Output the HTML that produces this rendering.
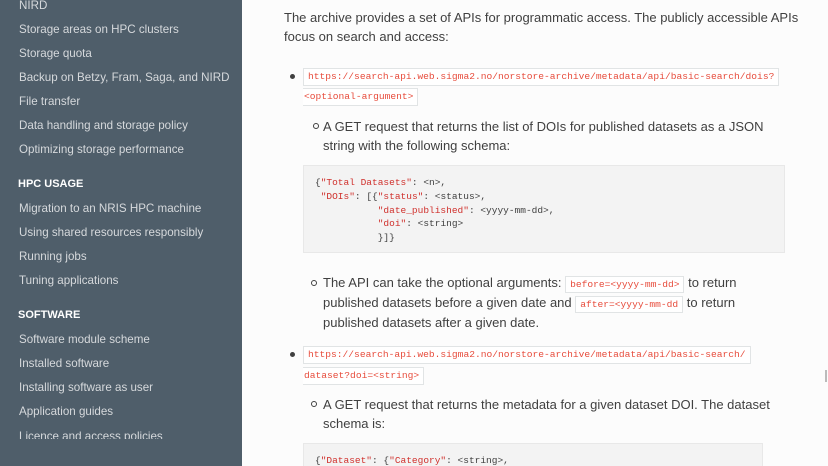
<!DOCTYPE html>
<html style="width:828px;height:466px;overflow:hidden"><head><meta charset="utf-8"><style>
*{margin:0;padding:0;box-sizing:border-box}
body{width:828px;height:466px;overflow:hidden;background:#fcfcfc;font-family:"Liberation Sans",sans-serif;position:relative}
.sb{position:absolute;left:0;top:0;width:242px;height:466px;background:#4f5e6a}
.sb .clip{position:absolute;left:0;top:0;width:242px;height:439px;overflow:hidden}
.sb div.i{position:absolute;left:19px;font-size:11.6px;color:#d6d9dc;line-height:14px;white-space:nowrap}
.sb div.h{position:absolute;left:18px;font-size:11px;font-weight:bold;color:#fff;line-height:14px}
.t{position:absolute;font-size:13px;color:#404040;line-height:19px;white-space:nowrap}
.c{font-family:"Liberation Mono",monospace;font-size:9.6px;color:#e74c3c;background:#fff;border:1px solid #e1e4e5;padding:2px 4px;line-height:14px}
.ac{position:absolute;font-family:"Liberation Mono",monospace;font-size:9.6px;color:#e74c3c;background:#fff;border:1px solid #e1e4e5;padding:1px 4px;line-height:14px;white-space:nowrap}
.dot{position:absolute;width:5px;height:5px;border-radius:50%;background:#404040}
.ring{position:absolute;width:6px;height:6px;border-radius:50%;border:1px solid #404040}
.pre{position:absolute;left:303px;width:482px;background:#f3f3f3;border:1px solid #e8e8e8;overflow:hidden}
.pre pre{position:absolute;left:11px;font-family:"Liberation Mono",monospace;font-size:9.5px;line-height:13.8px;color:#404040}
.s{color:#d0312d}
</style></head><body>
<div class="sb"><div class="clip">
<div class="i" style="top:-1px">NIRD</div>
<div class="i" style="top:23px">Storage areas on HPC clusters</div>
<div class="i" style="top:47px">Storage quota</div>
<div class="i" style="top:71px">Backup on Betzy, Fram, Saga, and NIRD</div>
<div class="i" style="top:95px">File transfer</div>
<div class="i" style="top:119px">Data handling and storage policy</div>
<div class="i" style="top:143px">Optimizing storage performance</div>
<div class="h" style="top:177px">HPC USAGE</div>
<div class="i" style="top:202px">Migration to an NRIS HPC machine</div>
<div class="i" style="top:226px">Using shared resources responsibly</div>
<div class="i" style="top:250px">Running jobs</div>
<div class="i" style="top:274px">Tuning applications</div>
<div class="h" style="top:308px">SOFTWARE</div>
<div class="i" style="top:333px">Software module scheme</div>
<div class="i" style="top:357px">Installed software</div>
<div class="i" style="top:381px">Installing software as user</div>
<div class="i" style="top:405px">Application guides</div>
<div class="i" style="top:430px">Licence and access policies</div>
</div></div>

<div class="t" style="left:284px;top:8px">The archive provides a set of APIs for programmatic access. The publicly accessible APIs</div>
<div class="t" style="left:284px;top:27px">focus on search and access:</div>

<div class="dot" style="left:290px;top:74px"></div>
<div class="ac" style="left:303px;top:68px">https://search-api.web.sigma2.no/norstore-archive/metadata/api/basic-search/dois?</div>
<div class="ac" style="left:303px;top:88px;border-left:none;padding-left:1px">&lt;optional-argument&gt;</div>

<div class="ring" style="left:313px;top:123px"></div>
<div class="t" style="left:323px;top:117px">A GET request that returns the list of DOIs for published datasets as a JSON</div>
<div class="t" style="left:323px;top:136px">string with the following schema:</div>

<div class="pre" style="top:165px;height:88px"><pre style="top:10px">{<span class="s">"Total Datasets"</span>: &lt;n&gt;,
 <span class="s">"DOIs"</span>: [{<span class="s">"status"</span>: &lt;status&gt;,
           <span class="s">"date_published"</span>: &lt;yyyy-mm-dd&gt;,
           <span class="s">"doi"</span>: &lt;string&gt;
           }]}</pre></div>

<div class="ring" style="left:311px;top:280px"></div>
<div class="t" style="left:323px;top:273px">The API can take the optional arguments: <span class="c">before=&lt;yyyy-mm-dd&gt;</span> to return</div>
<div class="t" style="left:323px;top:293px">published datasets before a given date and <span class="c">after=&lt;yyyy-mm-dd</span> to return</div>
<div class="t" style="left:323px;top:313px">published datasets after a given date.</div>

<div class="dot" style="left:290px;top:352px"></div>
<div class="ac" style="left:303px;top:346px">https://search-api.web.sigma2.no/norstore-archive/metadata/api/basic-search/</div>
<div class="ac" style="left:303px;top:367px;border-left:none;padding-left:1px">dataset?doi=&lt;string&gt;</div>

<div class="ring" style="left:311px;top:401px"></div>
<div class="t" style="left:323px;top:395px">A GET request that returns the metadata for a given dataset DOI. The dataset</div>
<div class="t" style="left:323px;top:414px">schema is:</div>

<div class="pre" style="top:443px;height:23px;width:460px;border-bottom:none"><pre style="top:10px">{<span class="s">"Dataset"</span>: {<span class="s">"Category"</span>: &lt;string&gt;,</pre></div>

<div style="position:absolute;left:825px;top:370px;width:2px;height:12px;background:#bbb"></div>
</body></html>
